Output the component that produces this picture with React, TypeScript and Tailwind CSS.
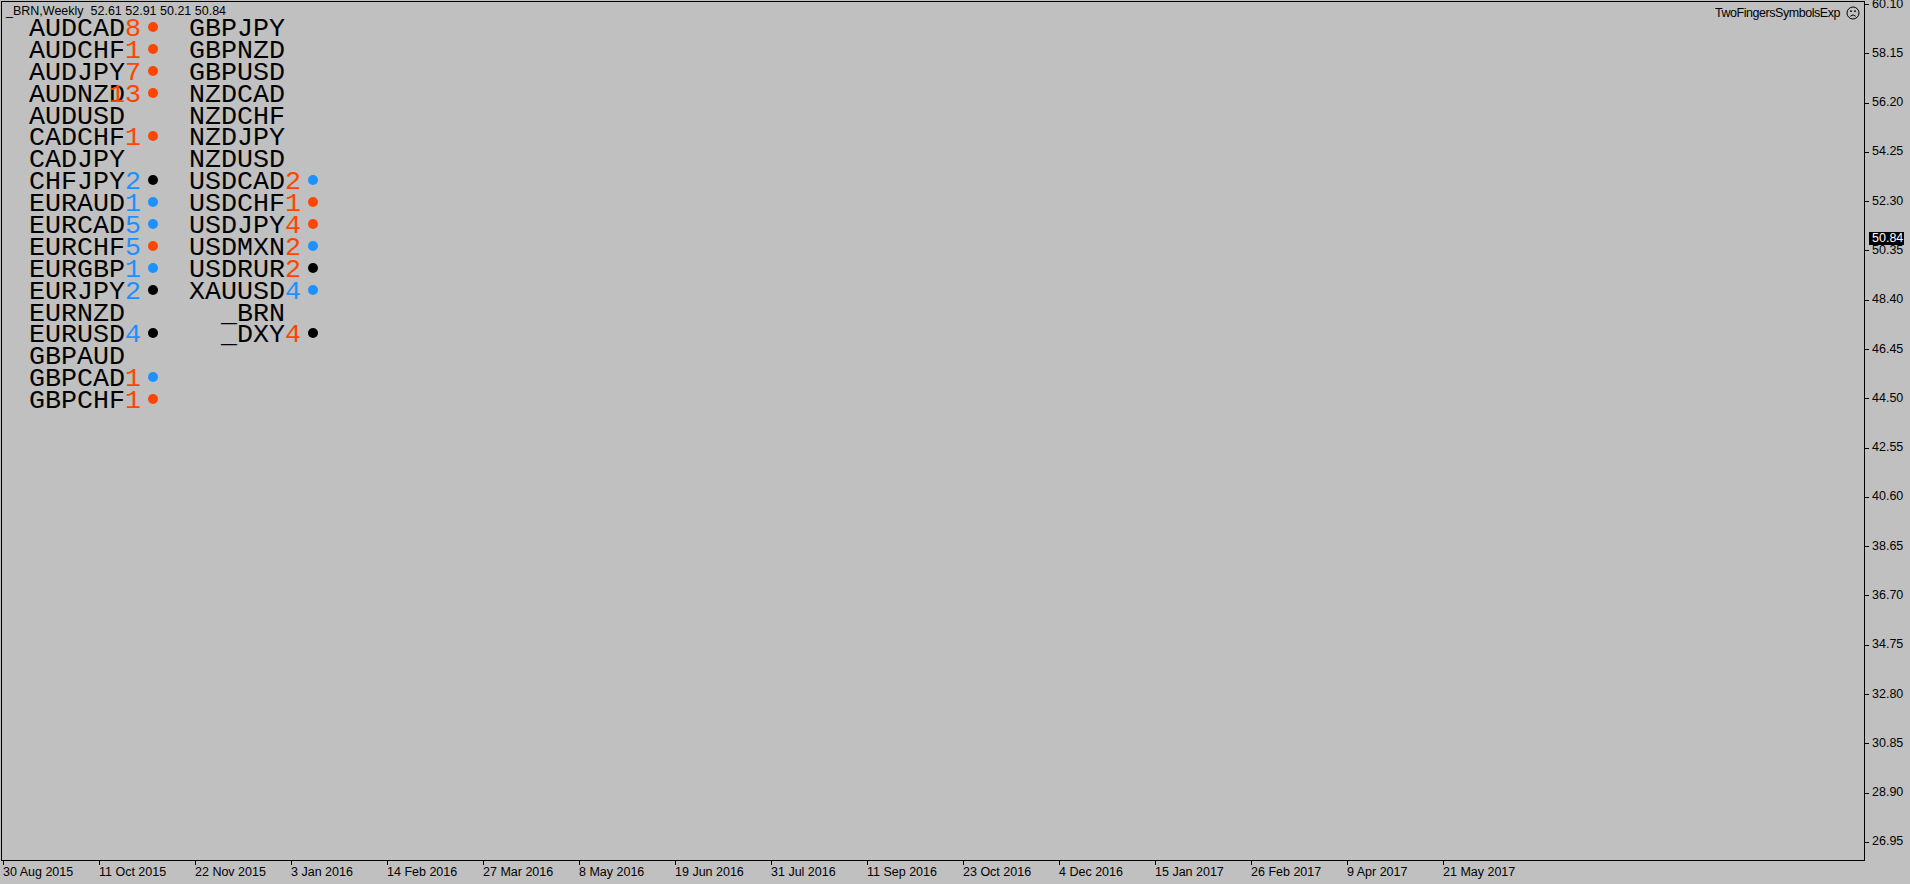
import React from "react";

type Row = { name: string; num?: string; numColor?: string; dot?: string };

const ORANGE = "text-[#ff4500]";
const BLUE = "text-[#1e90ff]";
const DOT_O = "bg-[#ff4500]";
const DOT_B = "bg-[#1e90ff]";
const DOT_K = "bg-black";

const left: Row[] = [
  { name: "AUDCAD", num: "8", numColor: ORANGE, dot: DOT_O },
  { name: "AUDCHF", num: "1", numColor: ORANGE, dot: DOT_O },
  { name: "AUDJPY", num: "7", numColor: ORANGE, dot: DOT_O },
  { name: "AUDNZD", num: "13", numColor: ORANGE, dot: DOT_O },
  { name: "AUDUSD" },
  { name: "CADCHF", num: "1", numColor: ORANGE, dot: DOT_O },
  { name: "CADJPY" },
  { name: "CHFJPY", num: "2", numColor: BLUE, dot: DOT_K },
  { name: "EURAUD", num: "1", numColor: BLUE, dot: DOT_B },
  { name: "EURCAD", num: "5", numColor: BLUE, dot: DOT_B },
  { name: "EURCHF", num: "5", numColor: BLUE, dot: DOT_O },
  { name: "EURGBP", num: "1", numColor: BLUE, dot: DOT_B },
  { name: "EURJPY", num: "2", numColor: BLUE, dot: DOT_K },
  { name: "EURNZD" },
  { name: "EURUSD", num: "4", numColor: BLUE, dot: DOT_K },
  { name: "GBPAUD" },
  { name: "GBPCAD", num: "1", numColor: ORANGE, dot: DOT_B },
  { name: "GBPCHF", num: "1", numColor: ORANGE, dot: DOT_O },
];

const right: Row[] = [
  { name: "GBPJPY" },
  { name: "GBPNZD" },
  { name: "GBPUSD" },
  { name: "NZDCAD" },
  { name: "NZDCHF" },
  { name: "NZDJPY" },
  { name: "NZDUSD" },
  { name: "USDCAD", num: "2", numColor: ORANGE, dot: DOT_B },
  { name: "USDCHF", num: "1", numColor: ORANGE, dot: DOT_O },
  { name: "USDJPY", num: "4", numColor: ORANGE, dot: DOT_O },
  { name: "USDMXN", num: "2", numColor: ORANGE, dot: DOT_B },
  { name: "USDRUR", num: "2", numColor: ORANGE, dot: DOT_K },
  { name: "XAUUSD", num: "4", numColor: BLUE, dot: DOT_B },
  { name: "_BRN" },
  { name: "_DXY", num: "4", numColor: ORANGE, dot: DOT_K },
];

const prices = [
  "60.10", "58.15", "56.20", "54.25", "52.30", "50.35", "48.40", "46.45", "44.50",
  "42.55", "40.60", "38.65", "36.70", "34.75", "32.80", "30.85", "28.90", "26.95",
];

const dates = [
  "30 Aug 2015", "11 Oct 2015", "22 Nov 2015", "3 Jan 2016", "14 Feb 2016", "27 Mar 2016",
  "8 May 2016", "19 Jun 2016", "31 Jul 2016", "11 Sep 2016", "23 Oct 2016", "4 Dec 2016",
  "15 Jan 2017", "26 Feb 2017", "9 Apr 2017", "21 May 2017",
];

// price -> y pixel on the axis
const priceY = (p: number) => 4 + ((60.1 - p) / 1.95) * 49.29;

function SymbolColumn({ rows }: { rows: Row[] }) {
  return (
    <div className="flex flex-col w-[160px] shrink-0">
      {rows.map((r) => (
        <div key={r.name} className="flex items-start h-[21.9px] leading-[22px] whitespace-nowrap">
          <div className="w-[96px] text-right">{r.name}</div>
          <div className={`w-[16px] flex justify-end ${r.numColor ?? ""}`}>{r.num ?? ""}</div>
          {r.dot && <div className={`ml-[7px] mt-[4px] w-[10px] h-[10px] rounded-full ${r.dot}`} />}
        </div>
      ))}
    </div>
  );
}

function SadFace() {
  return (
    <svg width="14" height="14" viewBox="0 0 14 14" fill="none" stroke="black" strokeWidth="1">
      <circle cx="7" cy="7" r="6" />
      <circle cx="5" cy="5.2" r="0.9" fill="black" stroke="none" />
      <circle cx="9" cy="5.2" r="0.9" fill="black" stroke="none" />
      <path d="M4.3 10.3 Q7 7.4 9.7 10.3" />
    </svg>
  );
}

export default function App() {
  return (
    <div className="w-[1910px] h-[884px] bg-[#c0c0c0] overflow-hidden flex flex-col text-black font-['Liberation_Sans',Arial,sans-serif]">
      <div className="flex h-[861px] shrink-0">
        <div className="ml-px mt-px w-[1864px] h-[860px] border border-black shrink-0 overflow-hidden">
          <div className="flex justify-between items-start h-[16px] pt-[3px] pl-[4px] pr-[4px] text-[12.5px] leading-[13px] whitespace-nowrap">
            <span>_BRN,Weekly&nbsp;&nbsp;52.61 52.91 50.21 50.84</span>
            <div className="flex items-center gap-[6px] mt-[1px]">
              <span className="tracking-[-0.45px]">TwoFingersSymbolsExp</span>
              <SadFace />
            </div>
          </div>
          <div className="flex pl-[27px] font-['Liberation_Mono','Courier_New',monospace] text-[26.67px]">
            <SymbolColumn rows={left} />
            <SymbolColumn rows={right} />
          </div>
        </div>
        <div className="relative flex-1 text-[12.5px] leading-[15px]">
          {prices.map((p) => {
            const y = priceY(parseFloat(p));
            return (
              <React.Fragment key={p}>
                <div className="absolute left-0 w-[4px] h-px bg-black" style={{ top: Math.round(y) }} />
                <div className="absolute left-[7px]" style={{ top: y - 7.5 }}>{p}</div>
              </React.Fragment>
            );
          })}
          <div
            className="absolute left-[4px] w-[35px] h-[13px] bg-black text-white pl-[3px] leading-[13px]"
            style={{ top: Math.round(priceY(50.84)) - 6 }}
          >
            50.84
          </div>
        </div>
      </div>
      <div className="flex pl-[3px] h-[23px] text-[12.5px] leading-[15px] whitespace-nowrap">
        {dates.map((d) => (
          <div key={d} className="relative w-[96px] shrink-0 pt-[4px]">
            <div className="absolute left-0 top-0 w-px h-[4px] bg-black" />
            {d}
          </div>
        ))}
      </div>
    </div>
  );
}
